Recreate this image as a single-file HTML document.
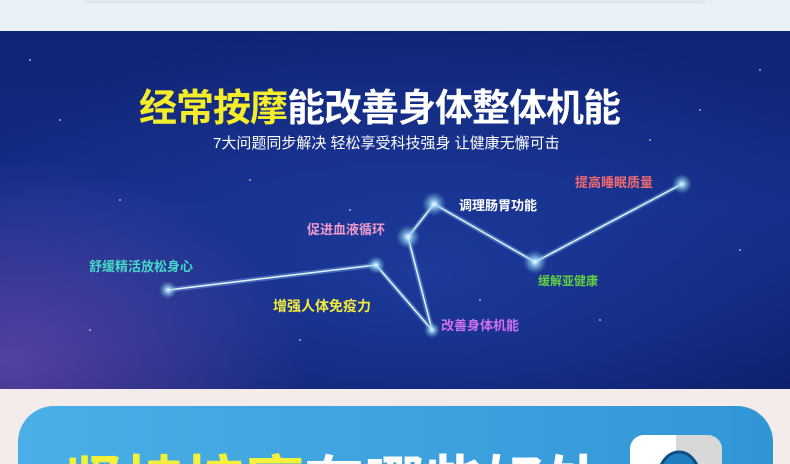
<!DOCTYPE html>
<html><head><meta charset="utf-8"><style>
*{margin:0;padding:0}
html,body{width:790px;height:464px;overflow:hidden}
body{background:#f3eceb;position:relative;font-family:"Liberation Sans","Noto Sans CJK SC",sans-serif}
.top{position:absolute;left:0;top:0;width:790px;height:31px;background:#e9f0f8}
.card{position:absolute;left:85px;top:0;width:620px;height:1px;background:#e4ebf3;box-shadow:0 1px 2px #c8ced6}
.sky{position:absolute;left:0;top:31px;width:790px;height:358px;overflow:hidden;
background:radial-gradient(ellipse 300px 200px at 10px 330px,rgba(140,90,200,.55),transparent),radial-gradient(ellipse 500px 250px at 420px 240px,#1c3a9a,transparent),linear-gradient(180deg,#0f2474 0%,#142c86 50%,#0c1c66 100%)}
.t{position:absolute;font-weight:bold;white-space:nowrap}
.blue{position:absolute;left:18px;top:406px;width:755px;height:58px;border-radius:36px 36px 0 0;background:linear-gradient(90deg,#4aafe6,#3196d6);overflow:hidden}
</style></head><body>
<div class="top"></div><div class="card"></div>
<div class="sky">
<svg width="790" height="358" style="position:absolute;left:0;top:0">
<defs><radialGradient id="g"><stop offset="0" stop-color="#fff"/><stop offset=".3" stop-color="#9fd8ff" stop-opacity=".8"/><stop offset="1" stop-color="#6ab" stop-opacity="0"/></radialGradient></defs>
<g transform="translate(0,-31)">
<polyline points="168,290 376,265 432,330 408,237 434,204 535,262 682,184" fill="none" stroke="#8fd0ff" stroke-width="5" opacity=".35"/>
<polyline points="168,290 376,265 432,330 408,237 434,204 535,262 682,184" fill="none" stroke="#e6f6ff" stroke-width="1.5"/>
<circle cx="168" cy="290" r="9" fill="url(#g)"/><circle cx="376" cy="265" r="9" fill="url(#g)"/>
<circle cx="432" cy="330" r="8" fill="url(#g)"/><circle cx="408" cy="237" r="12" fill="url(#g)"/>
<circle cx="434" cy="204" r="12" fill="url(#g)"/><circle cx="535" cy="262" r="12" fill="url(#g)"/>
<circle cx="682" cy="184" r="10" fill="url(#g)"/>
<g fill="#fff" opacity=".6">
<circle cx="60" cy="120" r="1"/><circle cx="120" cy="200" r="1"/><circle cx="250" cy="180" r="1"/><circle cx="700" cy="110" r="1"/><circle cx="740" cy="250" r="1"/><circle cx="600" cy="320" r="1"/><circle cx="300" cy="340" r="1"/><circle cx="520" cy="150" r="1"/><circle cx="650" cy="140" r="1"/><circle cx="90" cy="330" r="1"/><circle cx="480" cy="300" r="1"/><circle cx="350" cy="210" r="1"/><circle cx="760" cy="70" r="1"/><circle cx="30" cy="60" r="1"/></g>
</g></svg>
<div class="t" style="left:139px;top:46px;font-size:38px;color:#fff;letter-spacing:-1px"><span style="color:#f5ec2a">经常按摩</span>能改善身体整体机能</div>
<div class="t" style="left:213px;top:101px;font-size:15px;color:#fff;font-weight:normal">7大问题同步解决 轻松享受科技强身 让健康无懈可击</div>
<div class="t" style="left:89px;top:225px;font-size:13px;color:#46d9c8">舒缓精活放松身心</div>
<div class="t" style="left:273px;top:265px;font-size:14px;color:#f3ea3a">增强人体免疫力</div>
<div class="t" style="left:307px;top:188px;font-size:13px;color:#f09ac8">促进血液循环</div>
<div class="t" style="left:459px;top:164px;font-size:13px;color:#fff">调理肠胃功能</div>
<div class="t" style="left:441px;top:284px;font-size:13px;color:#d070f0">改善身体机能</div>
<div class="t" style="left:538px;top:241px;font-size:12px;color:#62d040">缓解亚健康</div>
<div class="t" style="left:575px;top:141px;font-size:13px;color:#f26a70">提高睡眠质量</div>
</div>
<div class="blue">
<svg width="755" height="58" style="position:absolute;left:0;top:0">
<text x="46" y="99" font-size="60" font-weight="bold" font-family="Liberation Sans, Noto Sans CJK SC, sans-serif" fill="#fff"><tspan fill="#f5f03a">坚持按摩</tspan>有哪些好处</text>
<rect x="612" y="29" width="92" height="60" rx="14" fill="#d8d8d8"/>
<path d="M626 29 H658 V89 H626 A14 14 0 0 1 612 75 V43 A14 14 0 0 1 626 29Z" fill="#fff"/>
<ellipse cx="661" cy="77" rx="22" ry="31" fill="#1f7ec0" stroke="#0d4f80" stroke-width="3"/>
</svg>
</div>
</body></html>
